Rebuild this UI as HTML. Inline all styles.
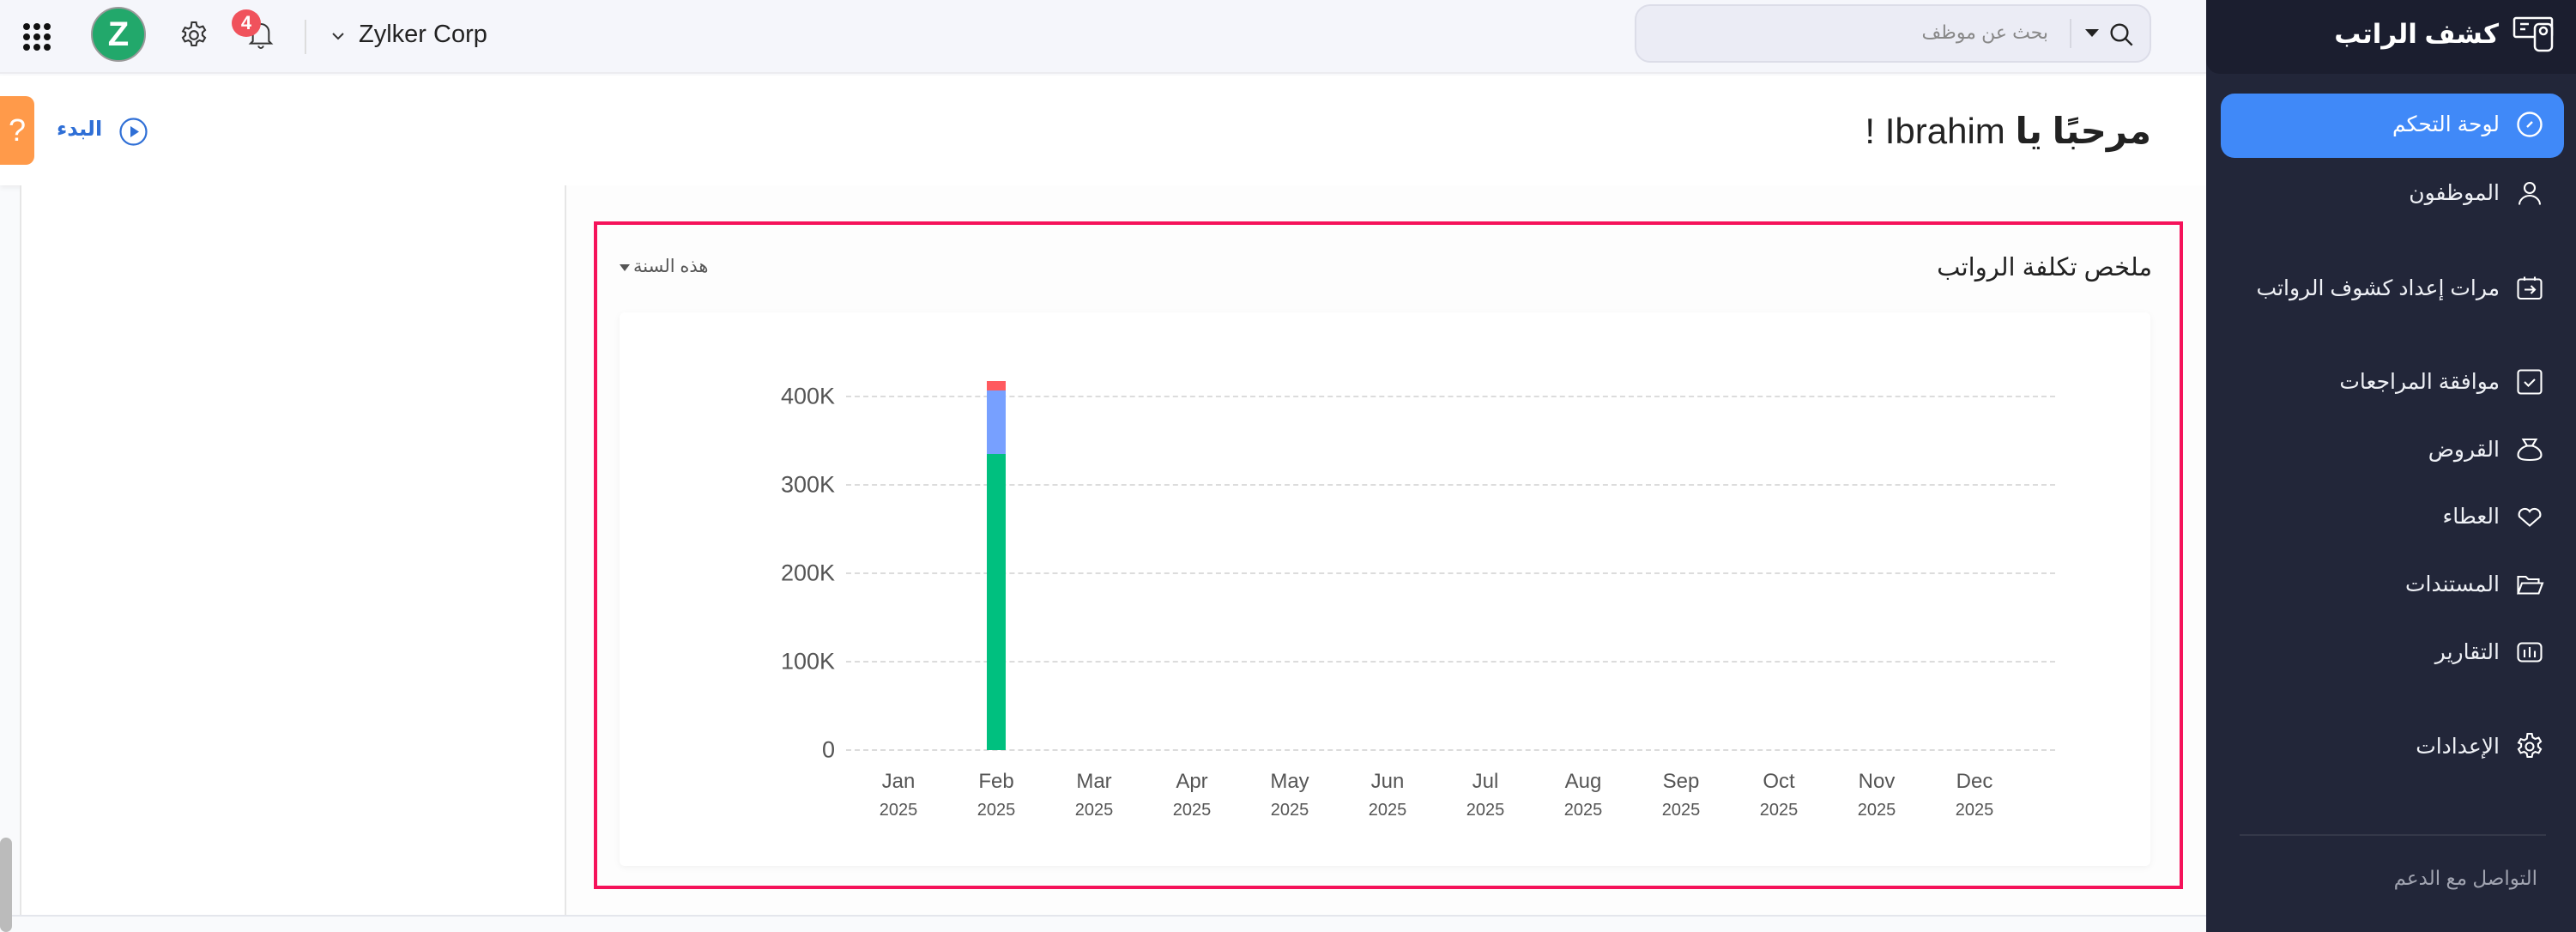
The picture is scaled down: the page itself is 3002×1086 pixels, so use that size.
<!DOCTYPE html>
<html><head><meta charset="utf-8"><style>
*{margin:0;padding:0;box-sizing:border-box}
body{width:3002px;height:1086px;position:relative;overflow:hidden;background:#f9fafc;font-family:"Liberation Sans","Noto Sans CJK SC",sans-serif}
.a{position:absolute}
.ar{font-family:"Liberation Sans","DejaVu Sans",sans-serif;direction:rtl;white-space:nowrap}
.side{left:2571px;top:0;width:431px;height:1086px;background:#222639}
.item{position:absolute;right:89px;color:#eef0f5;font-size:25px;transform:translateY(-50%)}
.ic{position:absolute;left:2930px;width:36px;height:36px;transform:translateY(-50%)}
.ml{position:absolute;width:100px;margin-left:-50px;text-align:center;color:#555;font-size:24px}
.yl{position:absolute;width:100px;margin-left:-50px;text-align:center;color:#555;font-size:20px}
.yv{position:absolute;right:2029px;color:#555;font-size:27px;transform:translateY(-50%)}
.gl{position:absolute;left:986px;width:1409px;border-top:2px dashed #dcdcdc}
</style></head><body>
<!-- top bar -->
<div class="a" style="left:0;top:0;width:2571px;height:86px;background:#f5f6fb;border-bottom:2px solid #ececf0"></div>
<svg class="a" style="left:26px;top:26px" width="34" height="34" viewBox="0 0 34 34" fill="#111"><circle cx="5" cy="5" r="4"/><circle cx="17" cy="5" r="4"/><circle cx="29" cy="5" r="4"/><circle cx="5" cy="17" r="4"/><circle cx="17" cy="17" r="4"/><circle cx="29" cy="17" r="4"/><circle cx="5" cy="29" r="4"/><circle cx="17" cy="29" r="4"/><circle cx="29" cy="29" r="4"/></svg>
<div class="a" style="left:106px;top:8px;width:64px;height:64px;border-radius:50%;background:#22a86b;border:2px solid #999;color:#fff;font-weight:bold;font-size:40px;text-align:center;line-height:60px">Z</div>
<svg class="a" style="left:208px;top:22px" width="36" height="38" viewBox="0 0 24 24" fill="none" stroke="#333" stroke-width="1.4"><path d="M10.3 2h3.4l.6 2.8 2 1.2 2.7-.9 1.7 2.9-2.1 1.9v2.2l2.1 1.9-1.7 2.9-2.7-.9-2 1.2-.6 2.8h-3.4l-.6-2.8-2-1.2-2.7.9-1.7-2.9 2.1-1.9v-2.2L3.4 9l1.7-2.9 2.7.9 2-1.2z"/><circle cx="12" cy="12" r="3.2"/></svg>
<svg class="a" style="left:288px;top:22px" width="32" height="36" viewBox="0 0 24 26" fill="none" stroke="#333" stroke-width="1.5"><path d="M5 19V11a7 7 0 0 1 14 0v8l2 2H3z"/><path d="M10 23a2 2 0 0 0 4 0"/></svg>
<div class="a" style="left:270px;top:11px;width:34px;height:32px;border-radius:50%;background:#f0525c;color:#fff;font-size:22px;font-weight:bold;text-align:center;line-height:32px">4</div>
<div class="a" style="left:355px;top:23px;width:2px;height:40px;background:#ddd"></div>
<svg class="a" style="left:386px;top:36px" width="16" height="12" viewBox="0 0 16 12" fill="none" stroke="#333" stroke-width="2"><path d="M2 3l6 6 6-6"/></svg>
<div class="a" style="left:418px;top:24px;font-size:29px;color:#222">Zylker Corp</div>
<!-- search -->
<div class="a" style="left:1905px;top:5px;width:602px;height:68px;background:#ebecf5;border:2px solid #dcdde8;border-radius:18px"></div>
<div class="a ar" style="right:615px;top:25px;font-size:22px;color:#888">بحث عن موظف</div>
<div class="a" style="left:2412px;top:22px;width:2px;height:34px;background:#d6d7e0"></div>
<div class="a" style="left:2430px;top:34px;width:0;height:0;border-left:8px solid transparent;border-right:8px solid transparent;border-top:9px solid #222"></div>
<svg class="a" style="left:2456px;top:24px" width="32" height="32" viewBox="0 0 24 24" fill="none" stroke="#222" stroke-width="1.8"><circle cx="10.5" cy="10.5" r="7"/><path d="M15.5 15.5l6 6"/></svg>
<!-- welcome -->
<div class="a" style="left:0;top:88px;width:2571px;height:128px;background:#fff;box-shadow:0 3px 6px rgba(0,0,0,.06)"></div>
<div class="a ar" style="right:495px;top:128px;font-size:42px;color:#222"><b>مرحبًا يا</b> Ibrahim !</div>
<div class="a" style="left:0;top:112px;width:40px;height:80px;background:#ff9a4a;border-radius:0 10px 10px 0;color:#fff;font-size:36px;text-align:center;line-height:80px">?</div>
<svg class="a" style="left:139px;top:137px" width="33" height="33" viewBox="0 0 33 33"><circle cx="16.5" cy="16.5" r="15" fill="none" stroke="#2f6fd6" stroke-width="2.2"/><path d="M13 10l10 6.5-10 6.5z" fill="#2f6fd6"/></svg>
<div class="a ar" style="left:66px;top:136px;font-size:24px;color:#2f6fd6;font-weight:bold">البدء</div>
<!-- content panels -->
<div class="a" style="left:23px;top:216px;width:637px;height:851px;background:#fff;border-left:2px solid #e6e6e6;border-right:2px solid #e6e6e6"></div>
<div class="a" style="left:660px;top:216px;width:1911px;height:851px;background:#fdfdfd"></div>
<div class="a" style="left:0;top:1066px;width:2571px;height:2px;background:#e4e6ec"></div>
<div class="a" style="left:0;top:976px;width:14px;height:110px;background:#bbb;border-radius:7px"></div>
<!-- red box -->
<div class="a" style="left:692px;top:258px;width:1852px;height:778px;border:4px solid #f5125a;background:#fdfdfd"></div>
<div class="a ar" style="right:494px;top:294px;font-size:29px;color:#222">ملخص تكلفة الرواتب</div>
<div class="a" style="left:722px;top:308px;width:0;height:0;border-left:6px solid transparent;border-right:6px solid transparent;border-top:8px solid #555"></div>
<div class="a ar" style="left:738px;top:298px;font-size:21px;color:#555">هذه السنة</div>
<div class="a" style="left:722px;top:364px;width:1784px;height:645px;background:#fff;border-radius:6px;box-shadow:0 2px 8px rgba(0,0,0,.05)"></div>
<!-- grid -->
<div class="gl" style="top:461px"></div><div class="gl" style="top:564px"></div><div class="gl" style="top:667px"></div><div class="gl" style="top:770px"></div><div class="gl" style="top:873px"></div>
<div class="yv" style="top:462px">400K</div><div class="yv" style="top:565px">300K</div><div class="yv" style="top:668px">200K</div><div class="yv" style="top:771px">100K</div><div class="yv" style="top:874px">0</div>
<div class="a" style="left:1150px;top:444px;width:22px;height:11px;background:#ff5a5f"></div>
<div class="a" style="left:1150px;top:455px;width:22px;height:74px;background:#77a0ff"></div>
<div class="a" style="left:1150px;top:529px;width:22px;height:345px;background:#00c07f"></div>
<div class="ml" style="left:1047px;top:897px">Jan</div><div class="yl" style="left:1047px;top:933px">2025</div>
<div class="ml" style="left:1161px;top:897px">Feb</div><div class="yl" style="left:1161px;top:933px">2025</div>
<div class="ml" style="left:1275px;top:897px">Mar</div><div class="yl" style="left:1275px;top:933px">2025</div>
<div class="ml" style="left:1389px;top:897px">Apr</div><div class="yl" style="left:1389px;top:933px">2025</div>
<div class="ml" style="left:1503px;top:897px">May</div><div class="yl" style="left:1503px;top:933px">2025</div>
<div class="ml" style="left:1617px;top:897px">Jun</div><div class="yl" style="left:1617px;top:933px">2025</div>
<div class="ml" style="left:1731px;top:897px">Jul</div><div class="yl" style="left:1731px;top:933px">2025</div>
<div class="ml" style="left:1845px;top:897px">Aug</div><div class="yl" style="left:1845px;top:933px">2025</div>
<div class="ml" style="left:1959px;top:897px">Sep</div><div class="yl" style="left:1959px;top:933px">2025</div>
<div class="ml" style="left:2073px;top:897px">Oct</div><div class="yl" style="left:2073px;top:933px">2025</div>
<div class="ml" style="left:2187px;top:897px">Nov</div><div class="yl" style="left:2187px;top:933px">2025</div>
<div class="ml" style="left:2301px;top:897px">Dec</div><div class="yl" style="left:2301px;top:933px">2025</div>
<!-- sidebar -->
<div class="a side"></div>
<div class="a" style="left:2571px;top:0;width:431px;height:86px;background:#1b1e2f;border-radius:0 0 0 16px"></div>
<div class="a ar" style="right:90px;top:22px;font-size:31px;color:#fff;font-weight:bold">كشف الراتب</div>
<svg class="a" style="left:2928px;top:18px" width="50" height="44" viewBox="0 0 50 44" fill="none" stroke="#fff" stroke-width="2.5"><rect x="2" y="3" width="44" height="22" rx="2"/><path d="M9 10h10M9 16h6"/><rect x="26" y="10" width="20" height="31" rx="5" fill="#1b1e2f"/><circle cx="36" cy="18" r="4"/></svg>
<div class="a" style="left:2588px;top:109px;width:400px;height:75px;background:#4089f8;border-radius:16px"></div>
<div class="item ar" style="top:145px;color:#fff">لوحة التحكم</div>
<svg class="ic" style="top:145px" viewBox="0 0 24 24" fill="none" stroke="#fff" stroke-width="1.6"><circle cx="12" cy="12" r="9"/><path d="M10 14l4-4"/></svg>
<div class="item ar" style="top:225px">الموظفون</div>
<svg class="ic" style="top:225px" viewBox="0 0 24 24" fill="none" stroke="#fff" stroke-width="1.4"><circle cx="12" cy="8" r="4"/><path d="M4 21c0-4 4-7 8-7s8 3 8 7"/></svg>
<div class="item ar" style="top:336px">مرات إعداد كشوف الرواتب</div>
<svg class="ic" style="top:336px" viewBox="0 0 24 24" fill="none" stroke="#fff" stroke-width="1.4"><rect x="3" y="5" width="18" height="15" rx="2"/><path d="M8 3v3M16 3v3M8 13h8M13 10l3 3-3 3"/></svg>
<div class="item ar" style="top:445px">موافقة المراجعات</div>
<svg class="ic" style="top:445px" viewBox="0 0 24 24" fill="none" stroke="#fff" stroke-width="1.4"><rect x="3" y="3" width="18" height="18" rx="2"/><path d="M8 12l3 3 5-5"/></svg>
<div class="item ar" style="top:524px">القروض</div>
<svg class="ic" style="top:524px" viewBox="0 0 24 24" fill="none" stroke="#fff" stroke-width="1.4"><path d="M7 4h10l-3 5c4 1 7 4 7 7 0 3-3 4-9 4s-9-1-9-4c0-3 3-6 7-7z"/><path d="M10 9h4"/></svg>
<div class="item ar" style="top:602px">العطاء</div>
<svg class="ic" style="top:602px" viewBox="0 0 24 24" fill="none" stroke="#fff" stroke-width="1.4"><path d="M12 19l-8-7a4.5 4.5 0 0 1 8-4 4.5 4.5 0 0 1 8 4z"/></svg>
<div class="item ar" style="top:681px">المستندات</div>
<svg class="ic" style="top:681px" viewBox="0 0 24 24" fill="none" stroke="#fff" stroke-width="1.4"><path d="M3 19V6h6l2 2h8v3M3 19l3-8h16l-3 8z"/></svg>
<div class="item ar" style="top:760px">التقارير</div>
<svg class="ic" style="top:760px" viewBox="0 0 24 24" fill="none" stroke="#fff" stroke-width="1.4"><rect x="3" y="5" width="18" height="14" rx="3"/><path d="M8 10v6M12 8v8M16 11v5"/></svg>
<div class="item ar" style="top:870px">الإعدادات</div>
<svg class="ic" style="top:870px" viewBox="0 0 24 24" fill="none" stroke="#fff" stroke-width="1.4"><path d="M10.3 2h3.4l.6 2.8 2 1.2 2.7-.9 1.7 2.9-2.1 1.9v2.2l2.1 1.9-1.7 2.9-2.7-.9-2 1.2-.6 2.8h-3.4l-.6-2.8-2-1.2-2.7.9-1.7-2.9 2.1-1.9v-2.2L3.4 9l1.7-2.9 2.7.9 2-1.2z"/><circle cx="12" cy="12" r="3"/></svg>
<div class="a" style="left:2610px;top:972px;width:357px;height:2px;background:#343849"></div>
<div class="a ar" style="right:45px;top:1010px;font-size:23px;color:#a0a3b0">التواصل مع الدعم</div>
</body></html>
